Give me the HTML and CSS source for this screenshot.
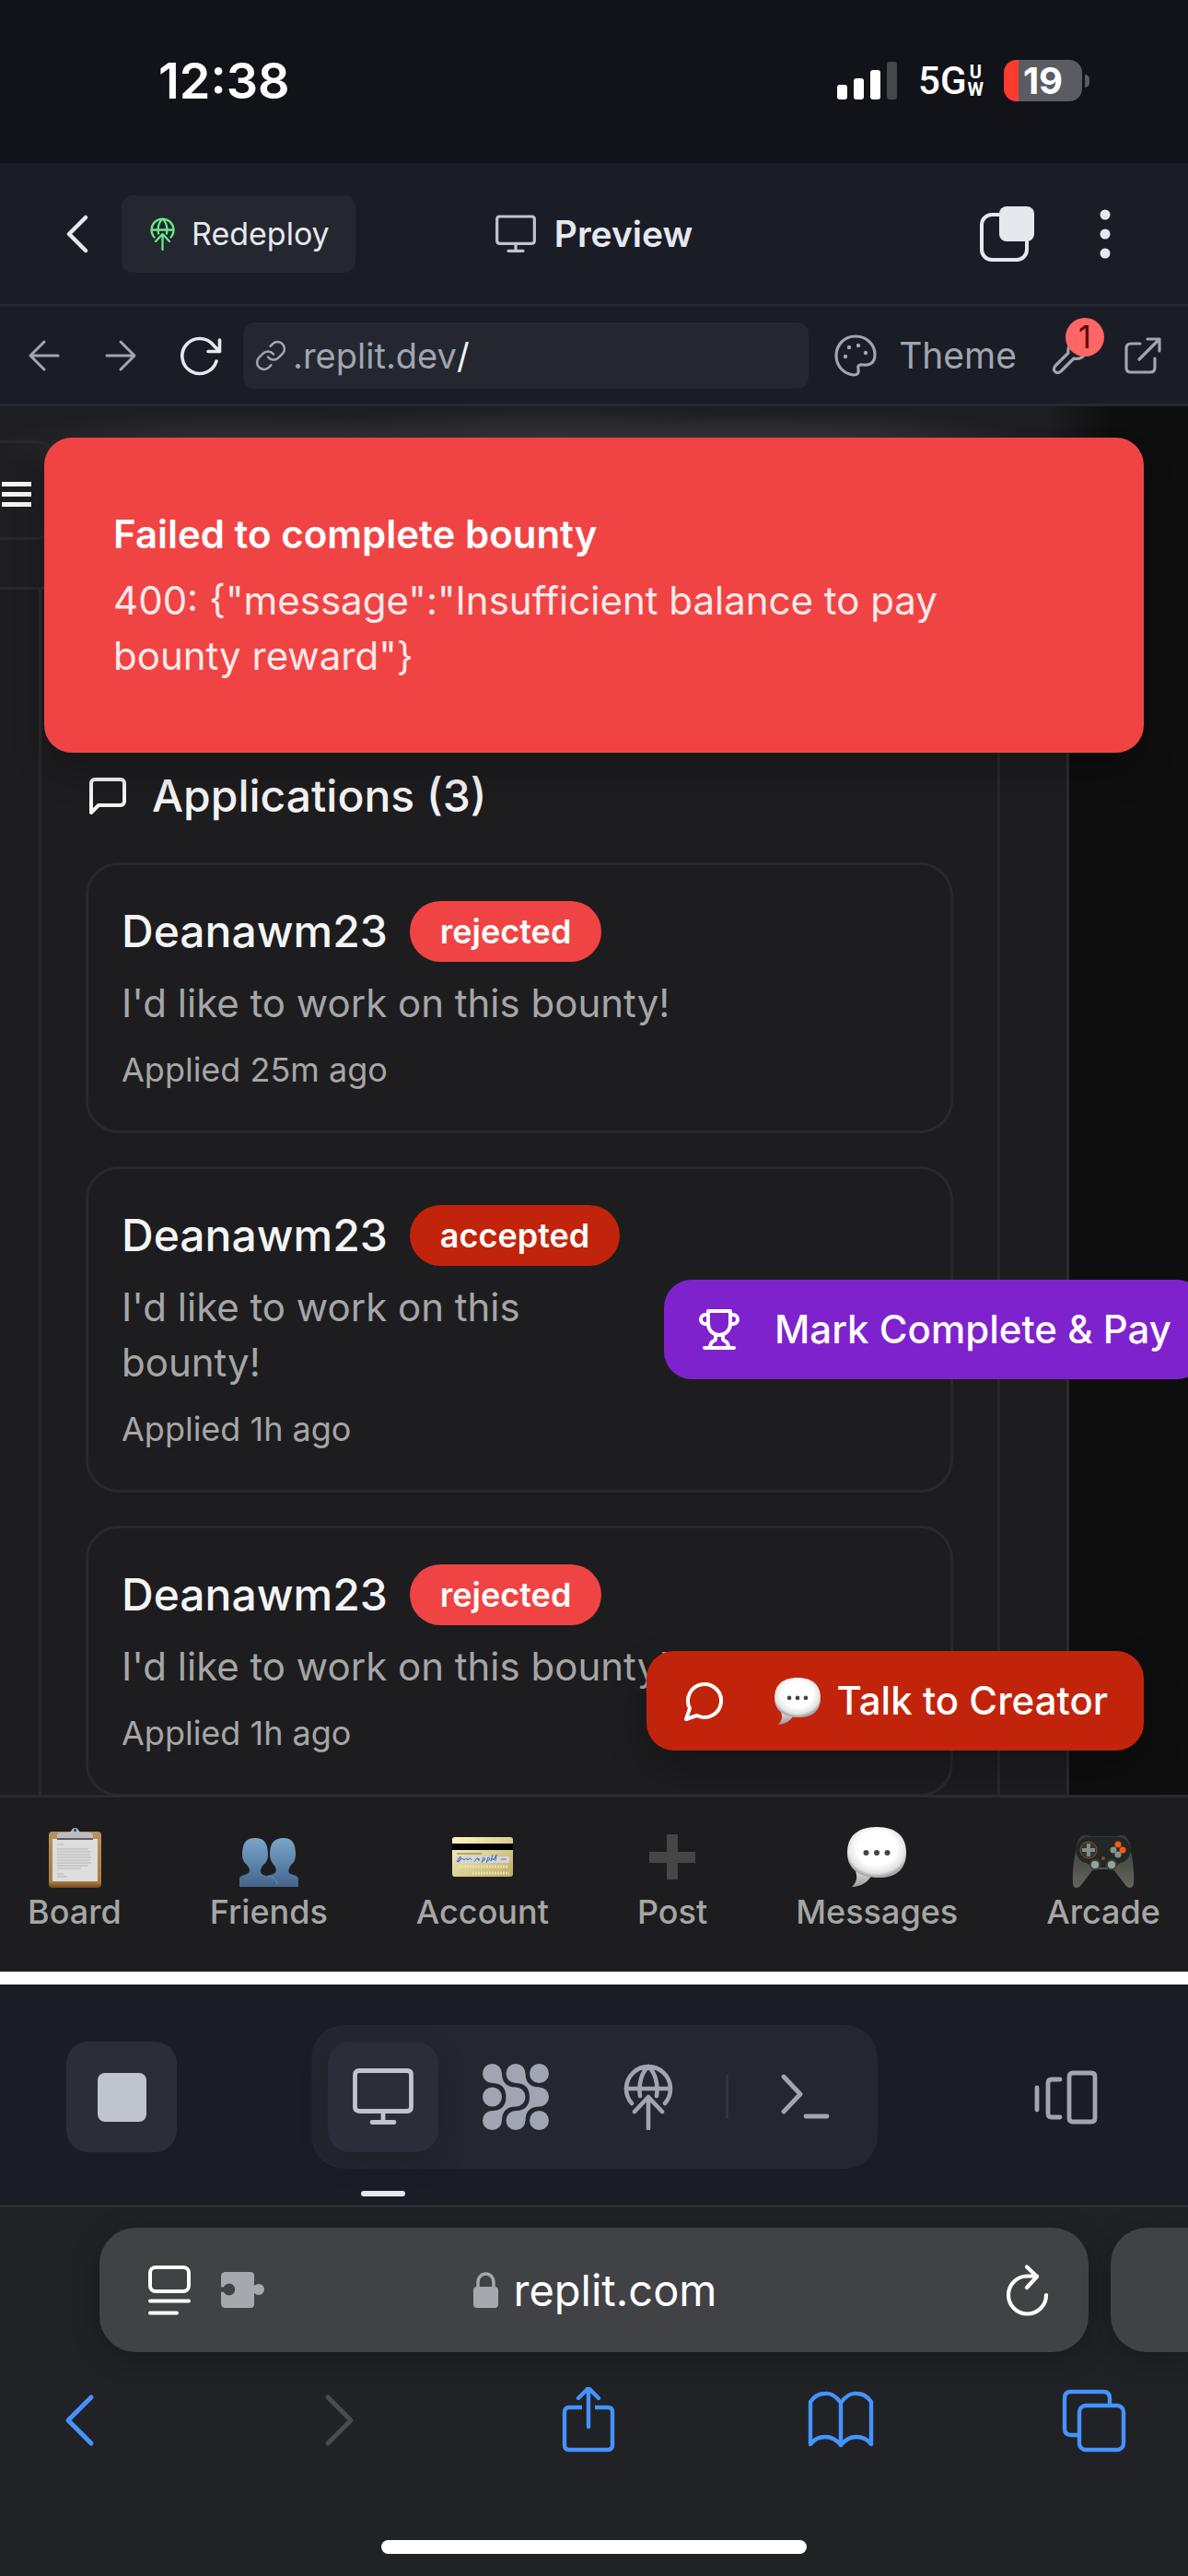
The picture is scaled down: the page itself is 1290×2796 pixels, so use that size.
FILE: index.html
```html
<!DOCTYPE html>
<html lang="en">
<head>
<meta charset="utf-8">
<meta name="viewport" content="width=device-width, initial-scale=1">
<title>Preview</title>
<link rel="stylesheet" href="styles.css">
</head>
<body>
<svg class="defs" aria-hidden="true">
  <defs>
    <symbol id="deploy" viewBox="0 0 54 72"><path d="M9 43A24 24 0 1 1 45 43M3 27H51M27 3C20 9 16 21 18 35M27 3C34 9 38 21 36 35M12 52L27 36L42 52M27 37V70" fill="none" stroke="currentColor" stroke-width="4.6" stroke-linecap="round" stroke-linejoin="round"/></symbol>
    <symbol id="monitor" viewBox="0 0 66 62"><path d="M7 2.5H59Q63.500 2.500 63.500 7V42Q63.500 46.500 59 46.500H7Q2.500 46.500 2.500 42V7Q2.500 2.500 7 2.500ZM33 47V58M21 58.500H45" fill="none" stroke="currentColor" stroke-width="4.800" stroke-linecap="round"/></symbol>
    <radialGradient id="puff" cx=".5" cy=".42" r=".56"><stop offset=".6" stop-color="#fff"/><stop offset=".88" stop-color="#e2e2e2"/><stop offset="1" stop-color="#a8a8a8"/></radialGradient>
    <linearGradient id="tail" x1="0" y1="0" x2="0" y2="1"><stop offset="0" stop-color="#dedede"/><stop offset="1" stop-color="#999"/></linearGradient>
    <symbol id="bubble" viewBox="0 0 72 72"><path d="M13 52C16 60 13 65 9 69C19 69 26 64 31 56Z" fill="url(#tail)"/><path d="M36 4C58 4 68 15 68 32C68 50 57 59 38 59C16 59 4 49 4 32C4 15 14 4 36 4Z" fill="url(#puff)"/><circle cx="24.500" cy="32" r="3" fill="#444"/><circle cx="36" cy="32" r="3" fill="#444"/><circle cx="47.500" cy="32" r="3" fill="#444"/></symbol>
    <linearGradient id="person" x1="0" y1="0" x2="0" y2="1"><stop offset="0" stop-color="#7aa5c8"/><stop offset="1" stop-color="#43658d"/></linearGradient>
    <linearGradient id="wood" x1="0" y1="0" x2="0" y2="1"><stop offset="0" stop-color="#b8925c"/><stop offset=".9" stop-color="#a87a3e"/><stop offset="1" stop-color="#71481c"/></linearGradient>
    <linearGradient id="gold" x1="0" y1="0" x2="1" y2="1"><stop offset="0" stop-color="#fdf7c4"/><stop offset="1" stop-color="#bcab66"/></linearGradient>
    <linearGradient id="pad" x1="0" y1="0" x2="0" y2="1"><stop offset="0" stop-color="#343a36"/><stop offset="1" stop-color="#63645c"/></linearGradient>
  </defs>
</svg>
<div class="screen">
  <div class="status">
    <time class="clock">12:38</time>
    <div class="radios">
      <svg width="66" height="42" viewBox="0 0 66 42" fill="#fff"><rect y="25" width="11" height="16" rx="3"/><rect x="18" y="18" width="11" height="23" rx="3"/><rect x="36" y="9" width="11" height="32" rx="3"/><rect x="54" width="11" height="41" rx="3" fill="#46474b"/></svg>
      <div class="network"><span>5G</span><span class="uw"><span>U</span><span>W</span></span></div>
      <div class="battery"><span class="cell">19</span><span class="nub"></span></div>
    </div>
  </div>

  <header class="topbar">
    <div class="topbar-side">
      <button class="plain" aria-label="Back"><svg width="24" height="42" viewBox="0 0 24 42"><path d="M21 3L3 21L21 39" class="line" stroke-width="4.500"/></svg></button>
      <button class="redeploy"><svg class="green" width="27" height="36"><use href="#deploy"/></svg>Redeploy</button>
    </div>
    <h1 class="title"><svg width="44" height="42"><use href="#monitor"/></svg>Preview</h1>
    <div class="topbar-side end">
      <button class="plain" aria-label="Windows"><svg width="60" height="60" viewBox="0 0 60 60"><rect x="2" y="9" width="49" height="49" rx="11" class="line" stroke-width="4"/><rect x="21" width="38" height="38" rx="8" fill="currentColor"/></svg></button>
      <button class="plain more" aria-label="More"><svg width="12" height="54" viewBox="0 0 12 54" fill="currentColor"><circle cx="6" cy="6" r="5.500"/><circle cx="6" cy="27" r="5.500"/><circle cx="6" cy="48" r="5.500"/></svg></button>
    </div>
  </header>

  <div class="urlbar">
    <div class="history">
      <button class="plain dim" aria-label="Go back"><svg width="36" height="36" viewBox="0 0 36 36"><path d="M33 18H3M18 3L3 18L18 33" class="line" stroke-width="3"/></svg></button>
      <button class="plain dim" aria-label="Go forward"><svg width="36" height="36" viewBox="0 0 36 36"><path d="M3 18H33M18 3L33 18L18 33" class="line" stroke-width="3"/></svg></button>
      <button class="plain" aria-label="Reload"><svg width="48" height="44" viewBox="0 0 48 44"><path d="M39 28A19 19 0 1 1 36 11L42.500 17.500M42.500 5V17.500H30" class="line" stroke-width="3.600"/></svg></button>
    </div>
    <label class="address"><svg width="36" height="36" viewBox="0 0 24 24"><path d="M10 13a5 5 0 0 0 7.540.540l3-3a5 5 0 0 0-7.070-7.070l-1.720 1.710M14 11a5 5 0 0 0-7.540-.540l-3 3a5 5 0 0 0 7.070 7.070l1.710-1.710" class="line" stroke-width="1.700"/></svg><span>.replit.dev</span><input type="text" value="/" aria-label="Path"></label>
    <button class="plain dim theme"><svg width="46" height="46" viewBox="0 0 46 46"><path d="M23 2C35 2 44 11 44 22C44 31 38 34 31 33C26 32 25 35 26 38C27 42 25 44 21 44C10 43 2 34 2 23C2 11 11 2 23 2Z" class="line" stroke-width="3.200"/><g fill="currentColor"><circle cx="16" cy="14" r="2.200"/><circle cx="26" cy="12" r="2.200"/><circle cx="12" cy="24" r="2.200"/><circle cx="34" cy="20" r="2.200"/></g></svg>Theme</button>
    <button class="plain dim tools" aria-label="Developer tools, 1 issue"><svg width="42" height="42" viewBox="0 0 42 42"><path d="M26 5C20 7 17 12 18 18L4 32C0 37 5 42 10 38L24 24C31 26 37 21 38 15L32 19L25 12Z" class="line" stroke-width="3.200"/></svg><span class="count">1</span></button>
    <button class="plain dim" aria-label="Open in new tab"><svg width="42" height="42" viewBox="0 0 42 42"><path d="M18 8H8Q3 8 3 13V34Q3 39 8 39H29Q34 39 34 34V24M26 3H39V16M38 4L17 25" class="line" stroke-width="3.200"/></svg></button>
  </div>

  <main class="preview">
    <div class="app-header"><button class="menu" aria-label="Menu"><svg width="34" height="28" viewBox="0 0 34 28"><path d="M2 2.500H34M2 13.500H34M2 24.500H34" stroke="currentColor" stroke-width="5"/></svg></button></div>
    <div class="sheet">
      <section class="panel">
        <h2 class="heading"><svg width="48" height="48" viewBox="0 0 24 24"><path d="M21 15a2 2 0 0 1-2 2H7l-4 4V5a2 2 0 0 1 2-2h14a2 2 0 0 1 2 2z" class="line" stroke-width="2"/></svg>Applications (3)</h2>
        <article class="card">
          <div class="who">
            <h3>Deanawm23 <span class="badge">rejected</span></h3>
            <p class="msg">I'd like to work on this bounty!</p>
            <p class="when">Applied 25m ago</p>
          </div>
        </article>
        <article class="card">
          <div class="who narrow">
            <h3>Deanawm23 <span class="badge accepted">accepted</span></h3>
            <p class="msg">I'd like to work on this bounty!</p>
            <p class="when">Applied 1h ago</p>
          </div>
          <button class="action pay"><svg width="48" height="48" viewBox="0 0 24 24"><path d="M6 9H4.500a2.500 2.500 0 0 1 0-5H6M18 9h1.500a2.500 2.500 0 0 0 0-5H18M4 22h16M10 14.660V17c0 .550-.470.980-.970 1.210C7.850 18.750 7 20.240 7 22M14 14.660V17c0 .550.470.980.970 1.210C16.150 18.750 17 20.240 17 22M18 2H6v7a6 6 0 0 0 12 0V2Z" class="line" stroke-width="2"/></svg>Mark Complete &amp; Pay</button>
        </article>
        <article class="card">
          <div class="who">
            <h3>Deanawm23 <span class="badge">rejected</span></h3>
            <p class="msg">I'd like to work on this bounty!</p>
            <p class="when">Applied 1h ago</p>
          </div>
        </article>
      </section>
    </div>
    <div class="toast" role="alert">
      <strong>Failed to complete bounty</strong>
      <p>400: {"message":"Insufficient balance to pay bounty reward"}</p>
    </div>
    <button class="action talk"><svg width="48" height="48" viewBox="0 0 24 24"><path d="M7.900 20A9 9 0 1 0 4 16.100L2 22Z" class="line" stroke-width="2"/></svg><span class="talk-label"><svg width="56" height="58"><use href="#bubble"/></svg>Talk to Creator</span></button>
  </main>

  <nav class="tabs">
    <a href="#board"><svg width="72" height="72" viewBox="0 0 72 72"><rect x="8" y="9" width="57" height="61" rx="4" fill="url(#wood)"/><rect x="12" y="17" width="49" height="46" fill="#ddd"/><path d="M17 17V13Q17 10 22 10H28Q32 10 33 7A4 4 0 0 1 40 7Q41 10 45 10H51Q56 10 56 13V17Z" fill="#b9bec5"/><rect x="17" y="16" width="39" height="2" fill="#665f5c"/><circle cx="36.500" cy="7.500" r="1.500" fill="#333"/><path d="M17 23H24M17 28H51M17 31H53M17 34H53M17 37H54M17 40H53M17 43H54M17 46H51M17 49H43M17 55H24M17 58H28" stroke="#b4b4b4" stroke-width="1"/></svg>Board</a>
    <a href="#friends"><svg width="72" height="72" viewBox="0 0 72 72"><g fill="url(#person)"><path d="M4 69V61C4 57 7 57 12 55C17 53 15 49 12 45C9 43 7 39 7 35C7 23 10 16 21 16C32 16 35 23 35 35C35 39 33 43 30 45C26 50 26 54 30 56C37 58 40 60 40 69Z"/><path d="M38 69C39 63 34 57 33 57C43 56 46 52 42 46C39 43 37 39 37 34C37 22 41 16 52 16C62 16 65 23 65 34C65 39 63 43 60 45C57 50 56 54 60 55C65 57 68 57 68 61V69Z"/></g><path d="M35 57C41 58 44 61 45 66" fill="none" stroke="#6894b7"/></svg>Friends</a>
    <a href="#account"><svg width="72" height="72" viewBox="0 0 72 72"><rect x="3" y="15" width="66" height="43" rx="3" fill="url(#gold)"/><path d="M3 22H69V29H3Z"/><path d="M7 36H65V43H7Z" fill="#d4d5dc"/><path d="M8 42Q12 35 12 36Q12 42 9 42Q14 36 16 40Q19 36 20 40Q23 36 24 40M27 42Q31 34 32 41M30 39H33M35 43L37 37Q41 39 36 41M40 43L42 37Q46 39 41 41M47 34L45 41Q47 36 48 40L51 34L50 41" fill="none" stroke="#3b69b1"/><path d="M8 33H35M56 39H62" stroke="#77705b"/><path d="M10 47H64M25 54H65" stroke="#e8dfae" stroke-width="3" stroke-dasharray="2 1"/></svg>Account</a>
    <a href="#post"><svg width="72" height="72" viewBox="0 0 72 72"><path d="M30 12H42V31H61V43H42V61H30V43H11V31H30Z" fill="#464646"/></svg>Post</a>
    <a href="#messages"><svg width="72" height="72"><use href="#bubble"/></svg>Messages</a>
    <a href="#arcade"><svg width="72" height="72" viewBox="0 0 72 72"><path d="M11 15Q15 11 22 14H50Q57 11 61 15Q65 20 66 30Q70 49 69 65Q69 70 64 70Q62 70 60 67L47 50H25L12 67Q10 70 7 70Q3 70 3 65Q2 49 6 30Q7 20 11 15Z" fill="url(#pad)"/><path d="M6 29Q9 15 19 15H53Q63 15 66 29Q64 42 54 43L48 48H24L18 43Q8 42 6 29Z" fill="#222825"/><circle cx="20" cy="29" r="9" fill="#303633" stroke="#94502a"/><path d="M20 22V36M13 29H27" stroke="#858b87" stroke-width="4"/><circle cx="52" cy="29" r="10" fill="#242825"/><circle cx="52" cy="23" r="3.500" fill="#f55c12"/><circle cx="57" cy="29" r="3.500" fill="#f55c12"/><circle cx="47" cy="29" r="3.500" fill="#8c918e"/><circle cx="52" cy="34" r="3.500" fill="#8c918e"/><circle cx="36" cy="38" r="2" fill="#974721"/><circle cx="27" cy="45" r="5" fill="#9ba39f" stroke="#3d4440" stroke-width="2"/><circle cx="45" cy="45" r="5" fill="#9ba39f" stroke="#3d4440" stroke-width="2"/></svg>Arcade</a>
  </nav>

  <div class="dock">
    <div class="dock-side"><button class="tile stop" aria-label="Stop"><span></span></button></div>
    <div class="group">
      <button class="tile active" aria-label="Preview"><svg width="66" height="62"><use href="#monitor"/></svg></button>
      <button class="tile" aria-label="Agent"><svg width="72" height="72" viewBox="0 0 72 72" fill="currentColor"><circle cx="10.500" cy="10.500" r="10.500"/><circle cx="36" cy="10.500" r="10.500"/><circle cx="61.500" cy="10.500" r="10.500"/><circle cx="10.500" cy="36" r="10.500"/><circle cx="36" cy="36" r="10.500"/><circle cx="61.500" cy="36" r="10.500"/><circle cx="10.500" cy="61.500" r="10.500"/><circle cx="36" cy="61.500" r="10.500"/><circle cx="61.500" cy="61.500" r="10.500"/><path d="M21 10.500C21 20 26 25.500 36 25.500L25.500 36C25.500 26 20 21 10.500 21ZM46.500 10.500C46.500 20 51.500 25.500 61.500 25.500L51 36C51 26 45.500 21 36 21ZM21 61.500C21 52 26 46.500 36 46.500L25.500 36C25.500 46 20 51 10.500 51ZM46.500 61.500C46.500 52 51.500 46.500 61.500 46.500L51 36C51 46 45.500 51 36 51Z"/></svg></button>
      <button class="tile" aria-label="Deployments"><svg width="54" height="72"><use href="#deploy"/></svg></button>
      <span class="divider"></span>
      <button class="tile" aria-label="Shell"><svg width="56" height="52" viewBox="0 0 56 52"><path d="M4 4L22 23L4 42M28 47H51" class="line" stroke-width="4.800"/></svg></button>
    </div>
    <div class="dock-side end"><button class="plain dim windows" aria-label="Tabs"><svg width="72" height="60" viewBox="0 0 72 60"><path d="M4 20V44M29 11H20Q16 11 16 15V48Q16 52 20 52H29M43 4H63Q67 4 67 8V53Q67 57 63 57H43Q39 57 39 53V8Q39 4 43 4Z" class="line" stroke-width="4.800"/></svg></button></div>
  </div>

  <footer class="browser">
    <div class="fields">
      <div class="field">
        <div class="field-side">
          <button class="plain" aria-label="Page settings"><svg width="46" height="54" viewBox="0 0 46 54"><rect x="2" y="2" width="42" height="26" rx="6" class="line" stroke-width="4"/><path d="M2 38.500H44M2 51.500H31" class="line" stroke-width="4"/></svg></button>
          <button class="plain grey" aria-label="Extensions"><svg width="48" height="39" viewBox="0 0 48 39"><path d="M5 0H32Q36 0 36 4V15Q38 13 41 13A6 6 0 0 1 41 25Q38 25 36 23V35Q36 39 32 39H5Q0 39 0 34V22Q2 21 3 22A6.500 6.500 0 1 0 3 16Q2 17 0 16V5Q0 0 5 0Z" fill="currentColor"/></svg></button>
        </div>
        <button class="plain site"><svg class="grey" width="28" height="40" viewBox="0 0 28 40"><rect y="16" width="27" height="23" rx="4" fill="currentColor"/><path d="M5 18V11A8.500 9 0 0 1 22 11V18" fill="none" stroke="currentColor" stroke-width="3.500"/></svg>replit.com</button>
        <div class="field-side end"><button class="plain" aria-label="Reload page"><svg width="46" height="56" viewBox="0 0 46 56"><path d="M43 33A20.500 20.500 0 1 1 22.500 12.500H33M22 2.500L33 13L22 25" class="line" stroke-width="4.200"/></svg></button></div>
      </div>
      <div class="field next"></div>
    </div>
    <div class="tools-row">
      <button class="plain" aria-label="Back"><svg width="72" height="72" viewBox="0 0 72 72"><path d="M49 11L24 36L49 61" class="line" stroke-width="5"/></svg></button>
      <button class="plain off" aria-label="Forward" disabled><svg width="72" height="72" viewBox="0 0 72 72"><path d="M30 11L55 36L30 61" class="line" stroke-width="5"/></svg></button>
      <button class="plain" aria-label="Share"><svg width="72" height="72" viewBox="0 0 72 72"><path d="M31 22H17Q12 22 12 27V63Q12 68 17 68H59Q64 68 64 63V27Q64 22 59 22H45" fill="none" stroke="currentColor" stroke-width="4.400"/><path d="M38 43V2M27 12L38 1L49 12" class="line" stroke-width="4.400"/></svg></button>
      <button class="plain" aria-label="Bookmarks"><svg width="72" height="72" viewBox="0 0 72 72"><path d="M36 17Q28 6 19 7Q9 7 3 16V62Q9 54 19 54Q29 54 36 63Q43 54 53 54Q63 54 69 62V16Q63 7 53 7Q44 6 36 17V63" class="line" stroke-width="4.400"/></svg></button>
      <button class="plain" aria-label="Tabs"><svg width="72" height="72" viewBox="0 0 72 72"><path d="M18 52H11Q4 52 4 45V12Q4 5 11 5H46Q53 5 53 12V18" fill="none" stroke="currentColor" stroke-width="4.400"/><rect x="20" y="20" width="48" height="48" rx="7" class="line" stroke-width="4.400"/></svg></button>
    </div>
    <div class="home"></div>
  </footer>
</div>
</body>
</html>
```
FILE: styles.css
```css
* { box-sizing: border-box; }
body { margin: 0; background: #fff; font-family: Inter, "Liberation Sans", sans-serif; }
h1, h2, h3, p { margin: 0; }
svg { display: block; flex: none; }
button { font: inherit; color: inherit; border: 0; margin: 0; padding: 0; background: none; }
.defs { position: absolute; width: 0; height: 0; }
.line { fill: none; stroke: currentColor; stroke-linecap: round; stroke-linejoin: round; }
.screen { display: flex; flex-direction: column; height: 100vh; overflow: hidden; color: #e6e8ee; }
.plain { display: flex; align-items: center; justify-content: center; }
.dim { color: #a0a5b1; }
.grey { color: #a7a8ad; }
.end { justify-content: flex-end; }

/* phone status bar */
.status { flex: none; height: 177px; padding: 0 107px 2px 172px; display: flex; align-items: center; justify-content: space-between; background: #121318; color: #fff; }
.clock { font-size: 54px; font-weight: 600; line-height: 60px; }
.radios { display: flex; align-items: center; gap: 22px; }
.network { display: flex; align-items: center; gap: 1px; font: 500 42px/46px "Liberation Sans Narrow", Roboto, sans-serif; }
.uw { display: flex; flex-direction: column; font: 700 20px/19px Roboto, sans-serif; text-align: center; }
.battery { display: flex; align-items: center; gap: 3px; }
.cell { width: 85px; height: 45px; border-radius: 14px; background: linear-gradient(90deg, #ff3b30 16px, #5b5c61 16px); text-align: center; font-size: 40px; font-weight: 700; line-height: 45px; }
.nub { width: 5px; height: 14px; border-radius: 0 5px 5px 0; background: #5b5c61; }

/* workspace header */
.topbar { flex: none; height: 156px; padding: 0 72px; display: flex; align-items: center; background: #1b1d26; border-bottom: 3px solid #262933; }
.topbar-side { flex: 1; display: flex; align-items: center; gap: 36px; }
.topbar .end { gap: 70px; }
.more { margin-right: 12px; }
.redeploy { display: flex; align-items: center; gap: 18px; height: 84px; padding: 0 28px 0 31px; border-radius: 12px; background: #24272f; font-size: 34px; line-height: 48px; }
.green { color: #6be78c; }
.title { display: flex; align-items: center; gap: 20px; font-size: 39px; font-weight: 600; line-height: 48px; }
.title svg { color: #c0c4ce; }

.urlbar { flex: none; height: 108px; padding: 0 28px 0 30px; display: flex; align-items: center; background: #1b1d26; border-bottom: 3px solid #262933; font-size: 38px; line-height: 48px; }
.history { display: flex; align-items: center; gap: 47px; margin-right: 20px; }
.address { flex: 1; min-width: 0; height: 72px; padding: 0 12px; display: flex; align-items: center; gap: 6px; border-radius: 12px; background: #24272f; color: #a0a5b1; }
.address input { flex: 1; min-width: 0; padding: 0; margin-left: -6px; border: 0; background: none; color: #f2f3f6; font: inherit; }
.theme { gap: 24px; margin: 0 38px 0 28px; font-size: 39px; }
.tools { position: relative; margin-right: 36px; }
.count { position: absolute; left: 15px; top: -20px; width: 42px; height: 42px; border-radius: 50%; background: #ff6666; color: #5c0000; font-size: 34px; line-height: 42px; text-align: center; }

/* previewed app */
.preview { position: relative; flex: 1; min-height: 0; overflow: hidden; background: #0e0e0e; color: #f4f4f4; }
.app-header { height: 199px; width: calc(100% - 82px); padding: 37px 0 0; border-bottom: 3px solid #29292b; background: radial-gradient(ellipse 260px 40px at 250px 44px, #343438, #34343800), radial-gradient(ellipse 360px 44px at 600px 44px, #3a3a3c, #3a3a3c00), radial-gradient(ellipse 240px 40px at 890px 44px, #38383a, #38383a00), linear-gradient(90deg, #1e1e22 94%, #0e0e0e); }
.menu { display: flex; align-items: center; width: 63px; height: 108px; padding-top: 9px; border: 3px solid #29292b; border-left: 0; border-radius: 0 24px 24px 0; }
.sheet { width: calc(100% - 129px); min-height: 100%; padding: 0 72px 0 42px; border-right: 3px solid #2b2b2d; background: #1d1d1f; }
.panel { display: flex; flex-direction: column; gap: 36px; padding: 188px 48px 36px; border: solid #29292b; border-width: 0 3px; }
.heading { display: flex; align-items: center; gap: 24px; font-size: 48px; font-weight: 500; line-height: 72px; }
.card { display: flex; align-items: center; gap: 48px; padding: 36px; border: 3px solid #29292b; border-radius: 36px; }
.who { flex: 1; min-width: 0; }
.narrow { flex: 0 0 541px; }
.card h3 { display: flex; align-items: center; gap: 24px; font-size: 48px; font-weight: 500; line-height: 72px; }
.badge { padding: 9px 33px; border-radius: 33px; background: #f04444; color: #fff; font-size: 36px; font-weight: 600; line-height: 48px; }
.accepted { background: #c2240b; }
.msg { margin-top: 12px; color: #a6a6a6; font-size: 42px; line-height: 60px; }
.when { margin-top: 12px; color: #a6a6a6; font-size: 36px; line-height: 60px; }
.action { flex: none; display: flex; align-items: center; gap: 36px; height: 108px; padding: 0 36px; border-radius: 30px; color: #fff; font-size: 42px; font-weight: 500; line-height: 60px; white-space: nowrap; }
.pay { background: #7e22ce; }
.talk { position: absolute; right: 48px; bottom: 48px; padding: 0 39px; gap: 49px; background: #c2240b; box-shadow: 0 20px 40px #0004; }
.talk-label { display: flex; align-items: center; gap: 14px; }
.toast { position: absolute; left: 48px; right: 48px; top: 34px; padding: 75px 210px 75px 75px; border-radius: 30px; background: #f04444; color: #fff; font-size: 42px; line-height: 60px; box-shadow: 0 24px 36px #0003; }
.toast strong { display: block; margin-bottom: 12px; font-weight: 600; }
.toast p { color: #fdeaea; }

.tabs { flex: none; height: 192px; padding: 28px 30px 0; display: flex; align-items: flex-start; justify-content: space-between; border-top: 3px solid #2b2b2d; background: #1d1d1f; }
.tabs a { display: flex; flex-direction: column; align-items: center; color: #a6a6a4; font-size: 36px; font-weight: 500; line-height: 48px; text-decoration: none; }

/* workspace dock */
.dock { flex: none; height: 240px; margin-top: 14px; padding: 4px 72px 0; display: flex; align-items: center; background: #1b1d26; color: #a0a5b1; }
.dock-side { flex: 1; display: flex; }
.windows { margin-right: 24px; }
.tile { display: flex; align-items: center; justify-content: center; width: 120px; height: 120px; border-radius: 24px; }
.stop, .active { background: #2b2d38; color: #c0c4ce; }
.stop span { width: 53px; height: 53px; border-radius: 8px; background: #c0c4ce; }
.group { display: flex; align-items: center; gap: 24px; padding: 18px; border-radius: 36px; background: #24272f; }
.active { position: relative; box-shadow: 0 12px 24px #1b1d2680; }
.active::after { content: ""; position: absolute; left: 36px; bottom: -48px; width: 48px; height: 6px; border-radius: 3px; background: #e6e8ee; }
.divider { width: 3px; height: 48px; background: #303340; }

/* phone browser bar */
.browser { flex: none; height: 402px; padding-top: 23px; border-top: 1px solid #3d3e43; background: #212225; color: #fff; overflow: hidden; }
.fields { display: flex; gap: 24px; padding-left: 108px; }
.field { flex: 1; height: 135px; padding: 0 43px 0 53px; display: flex; align-items: center; border-radius: 39px; background: #414245; box-shadow: 0 6px 30px #0004; }
.next { flex: 0 0 84px; border-radius: 39px 0 0 39px; padding: 0; }
.field-side { flex: 1; display: flex; align-items: center; gap: 33px; }
.site { gap: 16px; font-size: 47px; line-height: 60px; }
.site { margin-right: 8px; }
.tools-row { display: flex; justify-content: space-between; padding: 38px 66px 0 50px; color: #4593ff; }
.off { color: #4a4b4e; }
.home { width: 462px; height: 15px; margin: 94px auto 0; border-radius: 8px; background: #fff; }
```
